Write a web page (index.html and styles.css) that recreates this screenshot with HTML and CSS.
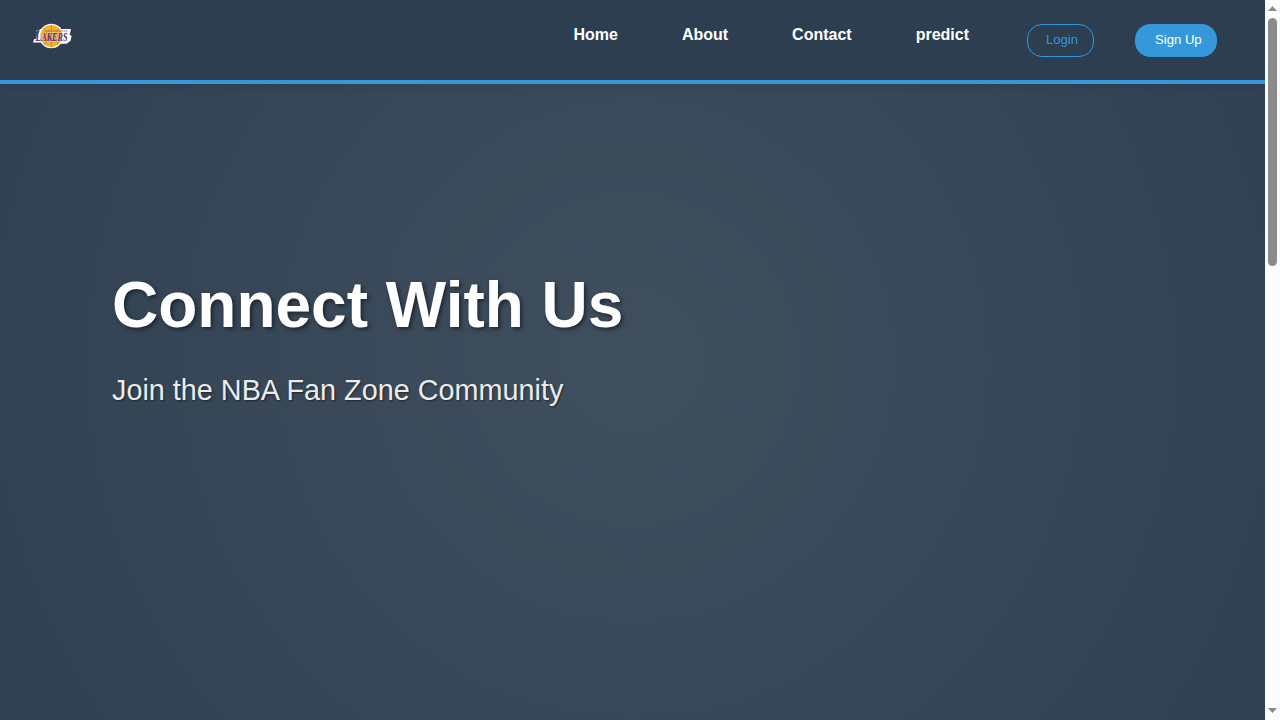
FILE: index.html
```html
<!DOCTYPE html>
<html lang="en">
<head>
<meta charset="utf-8">
<title>NBA Fan Zone</title>
<link rel="stylesheet" href="styles.css">
</head>
<body>
<div class="page">
  <header class="header">
    <svg class="logo" viewBox="0 0 40 26" width="40" height="26" aria-label="Lakers">
      <circle cx="19.3" cy="13" r="12.2" fill="#fff"/>
      <path d="M8 6h31l-1.4 6 2 .8-1 5-4 3H10l-1-1.2H1L2.2 16h1.6z" fill="#fff"/>
      <circle cx="19.3" cy="13" r="11" fill="#f3b02a"/>
      <path d="M19.3 2v22M11.5 5.5q7.5 7 1 16.5M27 5q-7 8-1 16.5M9.5 18q10-4 19.5 0" fill="none" stroke="#ad7938" stroke-width=".6"/>
      <path d="M14 8h22" stroke="#765087" stroke-width=".9" stroke-dasharray="1.5 .7"/>
      <text class="logo-word" x="3.5" y="18.4" textLength="32" lengthAdjust="spacingAndGlyphs"><tspan class="logo-initial">L</tspan>AKERS</text>
    </svg>
    <nav class="nav">
      <a class="link">Home</a>
      <a class="link">About</a>
      <a class="link">Contact</a>
      <a class="link">predict</a>
    </nav>
    <div class="actions">
      <button class="button login">Login</button>
      <button class="button signup">Sign Up</button>
    </div>
  </header>
  <main class="hero">
    <h1 class="title">Connect With Us</h1>
    <p class="subtitle">Join the NBA Fan Zone Community</p>
  </main>
</div>
<div class="scrollbar">
  <svg class="arrow" viewBox="0 0 9 5" width="9" height="5"><path d="M0 5L4.5 0 9 5z" fill="#8b8b8b"/></svg>
  <div class="track"><div class="thumb"></div></div>
  <svg class="arrow" viewBox="0 0 9 5" width="9" height="5"><path d="M0 0L4.5 5 9 0z" fill="#8b8b8b"/></svg>
</div>
</body>
</html>
```
FILE: styles.css
```css
* { box-sizing: border-box; }
body {
  margin: 0;
  height: 720px;
  display: flex;
  overflow: hidden;
  font-family: "Liberation Sans", Arial, sans-serif;
}
.page {
  width: 1265px;
  height: 720px;
  display: flex;
  flex-direction: column;
  background: radial-gradient(circle at 50% 50%, #404f5e 0%, #314254 90%);
}
.header {
  height: 84px;
  display: flex;
  align-items: flex-start;
  padding: 24px 48px 0 32px;
  background: #2c3e50;
  border-bottom: 4px solid #3498db;
  box-shadow: 0 2px 10px rgba(0, 0, 0, .1);
}
.logo { display: block; margin-top: -1px; overflow: visible; }
.logo-word {
  font: italic bold 12.5px "Liberation Serif", serif;
  fill: #562681;
  stroke: #fff;
  stroke-width: .4px;
  paint-order: stroke;
}
.logo-initial { font-size: 14.5px; }
.nav { display: flex; gap: 64px; margin-left: auto; }
.link { color: #fff; font-size: 16px; font-weight: bold; line-height: 22px; }
.actions { display: flex; gap: 41px; margin-left: 58px; }
.button {
  height: 33px;
  border: 1px solid #3498db;
  border-radius: 15px;
  font-family: inherit;
  font-size: 13.12px;
  line-height: 15px;
  text-align: left;
  white-space: nowrap;
}
.login { width: 67px; padding: 0 0 2px 18px; color: #3498db; background: transparent; }
.signup { width: 82px; padding: 0 0 2px 19px; color: #fff; background: #3498db; }
.hero { flex: 1; padding: 184px 112px 0; }
.title {
  margin: 0;
  color: #fff;
  font-size: 64px;
  line-height: 74px;
  text-shadow: 2px 2px 4px rgba(0, 0, 0, .5);
}
.subtitle {
  margin: 32px 0 0;
  color: #ebecec;
  font-size: 28.8px;
  line-height: 33px;
  text-shadow: 1px 1px 2px rgba(0, 0, 0, .5);
}
.scrollbar {
  width: 15px;
  display: flex;
  flex-direction: column;
  align-items: center;
  padding: 6px 0 7px;
  background: #fcfcfc;
}
.arrow { display: block; }
.track { flex: 1; padding-top: 7px; }
.thumb { width: 9px; height: 248px; border-radius: 4.5px; background: #8b8b8b; }
```
